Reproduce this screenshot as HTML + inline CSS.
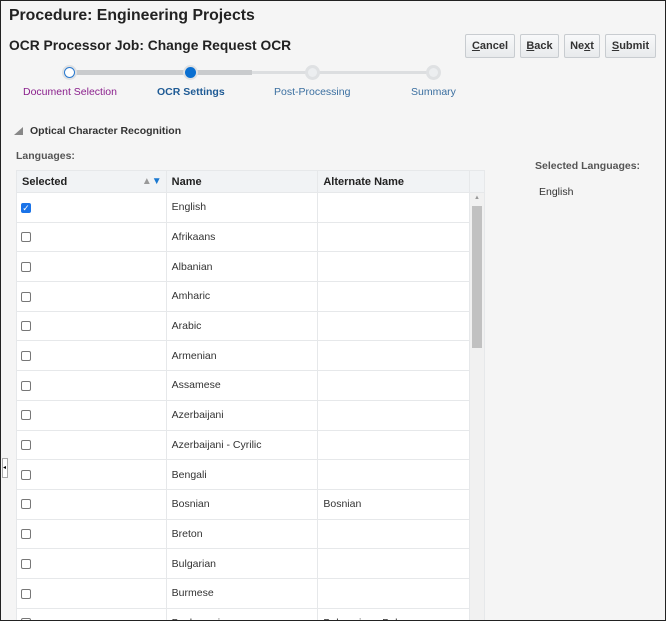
<!DOCTYPE html>
<html><head><style>
*{box-sizing:border-box;margin:0;padding:0}
body{width:666px;height:621px;overflow:hidden;background:#f5f5f5;font-family:"Liberation Sans",Arial,sans-serif;position:relative}
.frame{position:absolute;left:0;top:0;width:666px;height:621px;border:1px solid #222;z-index:9;pointer-events:none}
.abs{position:absolute}
h1{position:absolute;left:9px;top:7px;font-size:15.8px;font-weight:bold;color:#222}
h2{position:absolute;left:9px;top:38px;font-size:13.8px;font-weight:bold;color:#222}
.btn{position:absolute;top:34px;height:24px;border:1px solid #c8ccd0;background:linear-gradient(#f8f9fa,#e8eaec);border-radius:2px;font-size:11px;font-weight:bold;color:#333;text-align:center;line-height:22px}
.dot{position:absolute;top:65px;width:15px;height:15px;border-radius:50%;background:#dfe1e3;}
.dot i{position:absolute;left:3px;top:3px;width:9px;height:9px;border-radius:50%}
.lbl{position:absolute;top:86px;font-size:10.5px}
table{position:absolute;border-collapse:collapse;background:#fff;font-size:10.5px;color:#333}
td,th{border:1px solid #e6e8ea;padding:0 0 0 5px;text-align:left}
th{background:#f1f3f5;height:22px;font-weight:bold;color:#222;font-size:11px}
td{height:29.7px}
.cb{display:inline-block;width:10px;height:10px;border:1px solid #777;border-radius:2px;vertical-align:middle;margin-left:-1px}
</style></head><body>
<div class="frame"></div>
<h1>Procedure: Engineering Projects</h1>
<h2>OCR Processor Job: Change Request OCR</h2>
<div class="btn" style="left:465px;width:50px"><u>C</u>ancel</div>
<div class="btn" style="left:520px;width:39px"><u>B</u>ack</div>
<div class="btn" style="left:564px;width:36px">Ne<u>x</u>t</div>
<div class="btn" style="left:605px;width:51px"><u>S</u>ubmit</div>
<div class="abs" style="left:69px;top:70px;width:183px;height:5px;background:#c9cbcd"></div>
<div class="abs" style="left:252px;top:71px;width:181px;height:3px;background:#dcdee0"></div>
<div class="dot" style="left:62px"><i style="background:#fff;border:1px solid #2a7ad0;left:2px;top:2px;width:11px;height:11px"></i></div>
<div class="dot" style="left:183px"><i style="background:#0a6fd1;left:2px;top:2px;width:11px;height:11px"></i></div>
<div class="dot" style="left:305px"><i style="background:#eceef0"></i></div>
<div class="dot" style="left:426px"><i style="background:#eceef0"></i></div>
<div class="lbl" style="left:23px;color:#8a1f8c">Document Selection</div>
<div class="lbl" style="left:157px;color:#1f5b95;font-weight:bold">OCR Settings</div>
<div class="lbl" style="left:274px;color:#3b6fa0">Post-Processing</div>
<div class="lbl" style="left:411px;color:#3b6fa0">Summary</div>
<div class="abs" style="left:14px;top:127px;width:0;height:0;border-left:9px solid transparent;border-bottom:8px solid #888"></div>
<div class="abs" style="left:30px;top:125px;font-size:10.5px;font-weight:bold;color:#333">Optical Character Recognition</div>
<div class="abs" style="left:16px;top:150px;font-size:10.5px;font-weight:bold;color:#555">Languages:</div>
<div class="abs" style="left:535px;top:160px;font-size:10.5px;font-weight:bold;color:#555">Selected Languages:</div>
<div class="abs" style="left:539px;top:186px;font-size:10.5px;color:#333">English</div>
<div class="abs" style="left:2px;top:458px;width:6px;height:20px;border:1px solid #aaa;background:#fff;font-size:6px;line-height:18px">◂</div>
<div class="abs" style="left:16px;top:170px;width:469px;height:451px;overflow:hidden">
<table style="left:0;top:0;width:469px">
<tr><th style="width:150px">Selected<span style="float:right;margin-right:4px;font-size:10px"><span style="color:#999">▲</span><span style="color:#1a78d0">▼</span></span></th><th style="width:152px">Name</th><th style="width:152px">Alternate Name</th><th style="width:15px;padding:0"></th></tr>
<tr><td><span class="cb" style="background:#1a73e8;border-color:#1a73e8;color:#fff;font-size:9px;line-height:9px;text-align:center">✓</span></td><td>English</td><td></td><td rowspan="15" style="padding:0;background:#f1f1f1;position:relative"><div style="position:absolute;left:2px;top:13px;width:10px;height:142px;background:#c1c1c1"></div><div style="position:absolute;left:4px;top:2px;font-size:6px;color:#999">▲</div></td></tr>
<tr><td><span class="cb"></span></td><td>Afrikaans</td><td></td></tr>
<tr><td><span class="cb"></span></td><td>Albanian</td><td></td></tr>
<tr><td><span class="cb"></span></td><td>Amharic</td><td></td></tr>
<tr><td><span class="cb"></span></td><td>Arabic</td><td></td></tr>
<tr><td><span class="cb"></span></td><td>Armenian</td><td></td></tr>
<tr><td><span class="cb"></span></td><td>Assamese</td><td></td></tr>
<tr><td><span class="cb"></span></td><td>Azerbaijani</td><td></td></tr>
<tr><td><span class="cb"></span></td><td>Azerbaijani - Cyrilic</td><td></td></tr>
<tr><td><span class="cb"></span></td><td>Bengali</td><td></td></tr>
<tr><td><span class="cb"></span></td><td>Bosnian</td><td>Bosnian</td></tr>
<tr><td><span class="cb"></span></td><td>Breton</td><td></td></tr>
<tr><td><span class="cb"></span></td><td>Bulgarian</td><td></td></tr>
<tr><td><span class="cb"></span></td><td>Burmese</td><td></td></tr>
<tr><td><span class="cb"></span></td><td>Byelorussian</td><td>Belarusian - Bel</td></tr>
</table></div>
</body></html>
